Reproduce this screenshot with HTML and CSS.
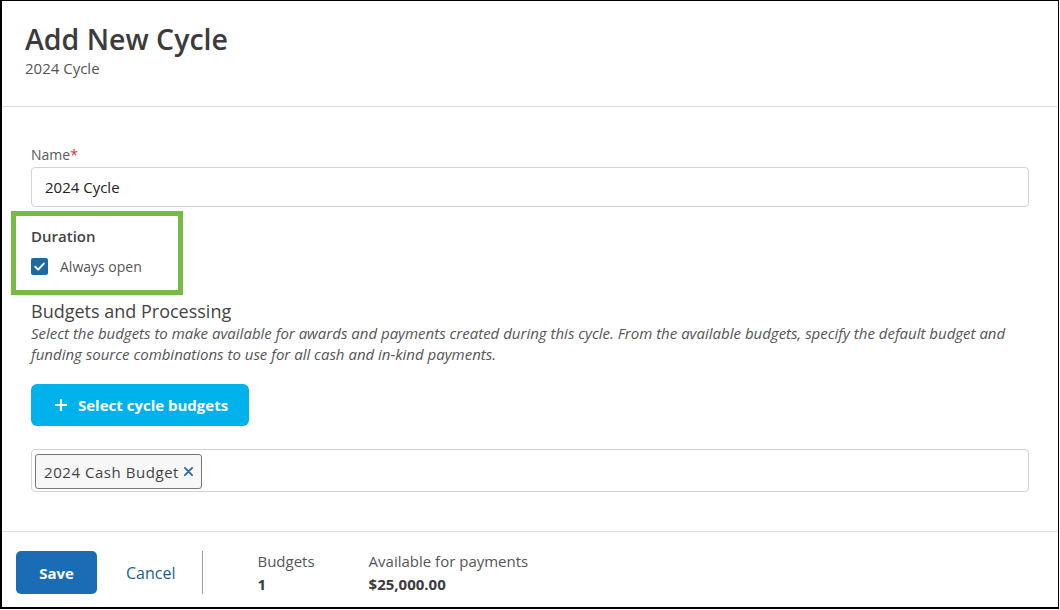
FILE: index.html
```html
<!DOCTYPE html>
<html lang="en">
<head>
<meta charset="utf-8">
<title>Add New Cycle</title>
<link rel="stylesheet" href="styles.css">
</head>
<body>
<div class="frame">
  <header class="header">
    <h1 class="title">Add New Cycle</h1>
    <div class="subtitle">2024 Cycle</div>
  </header>
  <main class="main">
    <div class="field">
      <label class="label">Name<span class="req">*</span></label>
      <div class="input">2024 Cycle</div>
    </div>
    <div class="duration">
      <div class="duration-title">Duration</div>
      <div class="check-row">
        <span class="checkbox">
          <svg viewBox="0 0 17 17" width="17" height="17"><path d="M4.3 8.8 L7.2 11.6 L12.8 5.6" fill="none" stroke="#fff" stroke-width="2" stroke-linecap="round" stroke-linejoin="round"/></svg>
        </span>
        <span class="check-label">Always open</span>
      </div>
      <div class="highlight"></div>
    </div>
    <h2 class="section-title">Budgets and Processing</h2>
    <p class="section-desc">Select the budgets to make available for awards and payments created during this cycle. From the available budgets, specify the default budget and<br>funding source combinations to use for all cash and in-kind payments.</p>
    <button class="btn-select" type="button">
      <svg viewBox="0 0 12 12" width="12" height="12"><path d="M6 0.5 V11.5 M0.5 6 H11.5" stroke="#fff" stroke-width="2.2" stroke-linecap="round"/></svg>
      <span>Select cycle budgets</span>
    </button>
    <div class="tags">
      <span class="tag">2024 Cash Budget
        <svg class="tag-x" viewBox="0 0 10 10" width="9" height="9"><path d="M1 1 L9 9 M9 1 L1 9" stroke="#2b6a9c" stroke-width="2" stroke-linecap="round"/></svg>
      </span>
    </div>
  </main>
  <footer class="footer">
    <button class="btn-save" type="button">Save</button>
    <a class="cancel" href="#">Cancel</a>
    <span class="vdivider"></span>
    <div class="stat">
      <div class="stat-label">Budgets</div>
      <div class="stat-value">1</div>
    </div>
    <div class="stat">
      <div class="stat-label">Available for payments</div>
      <div class="stat-value">$25,000.00</div>
    </div>
  </footer>
</div>
</body>
</html>
```

FILE: styles.css
```css
html, body {
  margin: 0;
  padding: 0;
  background: #fff;
}
body {
  width: 1060px;
  height: 610px;
  font-family: "Open Sans", "Liberation Sans", sans-serif;
  color: #333;
}
.frame {
  width: 1059px;
  height: 609px;
  box-sizing: border-box;
  border: 1px solid #000;
  border-left-width: 2px;
  border-bottom-width: 2px;
  display: flex;
  flex-direction: column;
  overflow: hidden;
}
.header {
  padding: 21px 22px 28px 23px;
  border-bottom: 1px solid #dcdcdc;
}
.title {
  margin: 0;
  font-size: 28.5px;
  line-height: 34px;
  font-weight: 600;
  color: #3b3b3b;
}
.subtitle {
  margin-top: 2px;
  font-size: 15px;
  line-height: 20px;
  color: #555;
}
.main {
  flex: 1;
  padding: 38px 29px 0;
}
.label {
  display: block;
  font-size: 14px;
  line-height: 20px;
  color: #5a5a5a;
}
.req {
  color: #e0282e;
}
.input {
  margin-top: 2px;
  height: 40px;
  box-sizing: border-box;
  border: 1px solid #cfd4da;
  border-radius: 4px;
  padding: 0 13px;
  display: flex;
  align-items: center;
  font-size: 15px;
  color: #222;
}
.duration {
  position: relative;
  margin-top: 19px;
}
.duration-title {
  font-size: 15px;
  line-height: 20px;
  font-weight: 600;
  color: #444;
}
.check-row {
  margin-top: 11px;
  height: 20px;
  display: flex;
  align-items: center;
  gap: 12px;
}
.checkbox {
  width: 17px;
  height: 17px;
  margin-top: -2px;
  border-radius: 2px;
  background: #1c6aa3;
  display: flex;
}
.check-label {
  font-size: 14px;
  line-height: 20px;
  color: #555;
}
.highlight {
  position: absolute;
  left: -20px;
  top: -15px;
  width: 172px;
  height: 84px;
  box-sizing: border-box;
  border: 5px solid #75bb45;
  pointer-events: none;
}
.section-title {
  margin: 22px 0 0;
  font-size: 18px;
  line-height: 24px;
  font-weight: 400;
  color: #444;
}
.section-desc {
  margin: 0;
  font-size: 15px;
  line-height: 21px;
  font-style: italic;
  color: #555;
}
.btn-select {
  margin-top: 19px;
  width: 218px;
  height: 42px;
  border: none;
  border-radius: 6px;
  background: #00b2ec;
  color: #fff;
  font-family: inherit;
  font-size: 15px;
  font-weight: 700;
  display: flex;
  align-items: center;
  gap: 11px;
  padding: 0 0 0 24px;
  cursor: pointer;
}
.tags {
  margin-top: 23px;
  height: 43px;
  box-sizing: border-box;
  border: 1px solid #cfd4da;
  border-radius: 4px;
  padding: 4px 3px;
  display: flex;
  align-items: flex-start;
}
.tag {
  height: 35px;
  box-sizing: border-box;
  border: 1px solid #777;
  border-radius: 3px;
  background: #f7f7f7;
  padding: 0 8px;
  display: flex;
  align-items: center;
  gap: 5px;
  font-size: 15px;
  letter-spacing: 0.55px;
  color: #444;
}
.footer {
  border-top: 1px solid #dcdcdc;
  padding: 19px 14px 0;
  height: 76px;
  box-sizing: border-box;
  display: flex;
  align-items: flex-start;
}
.btn-save {
  width: 81px;
  height: 43px;
  border: none;
  border-radius: 5px;
  background: #1a6db4;
  color: #fff;
  font-family: inherit;
  font-size: 15px;
  font-weight: 700;
  cursor: pointer;
}
.cancel {
  margin-left: 29px;
  height: 43px;
  display: flex;
  align-items: center;
  font-size: 16px;
  color: #1d5f8c;
  text-decoration: none;
}
.vdivider {
  margin-left: 27px;
  width: 1px;
  height: 43px;
  background: #9a9a9a;
}
.stat {
  margin-left: 54px;
}
.stat + .stat {
  margin-left: 54px;
}
.stat-label {
  font-size: 15px;
  line-height: 20px;
  color: #555;
}
.stat-value {
  margin-top: 3px;
  font-size: 15px;
  line-height: 20px;
  font-weight: 700;
  color: #3b3b3b;
}
```
